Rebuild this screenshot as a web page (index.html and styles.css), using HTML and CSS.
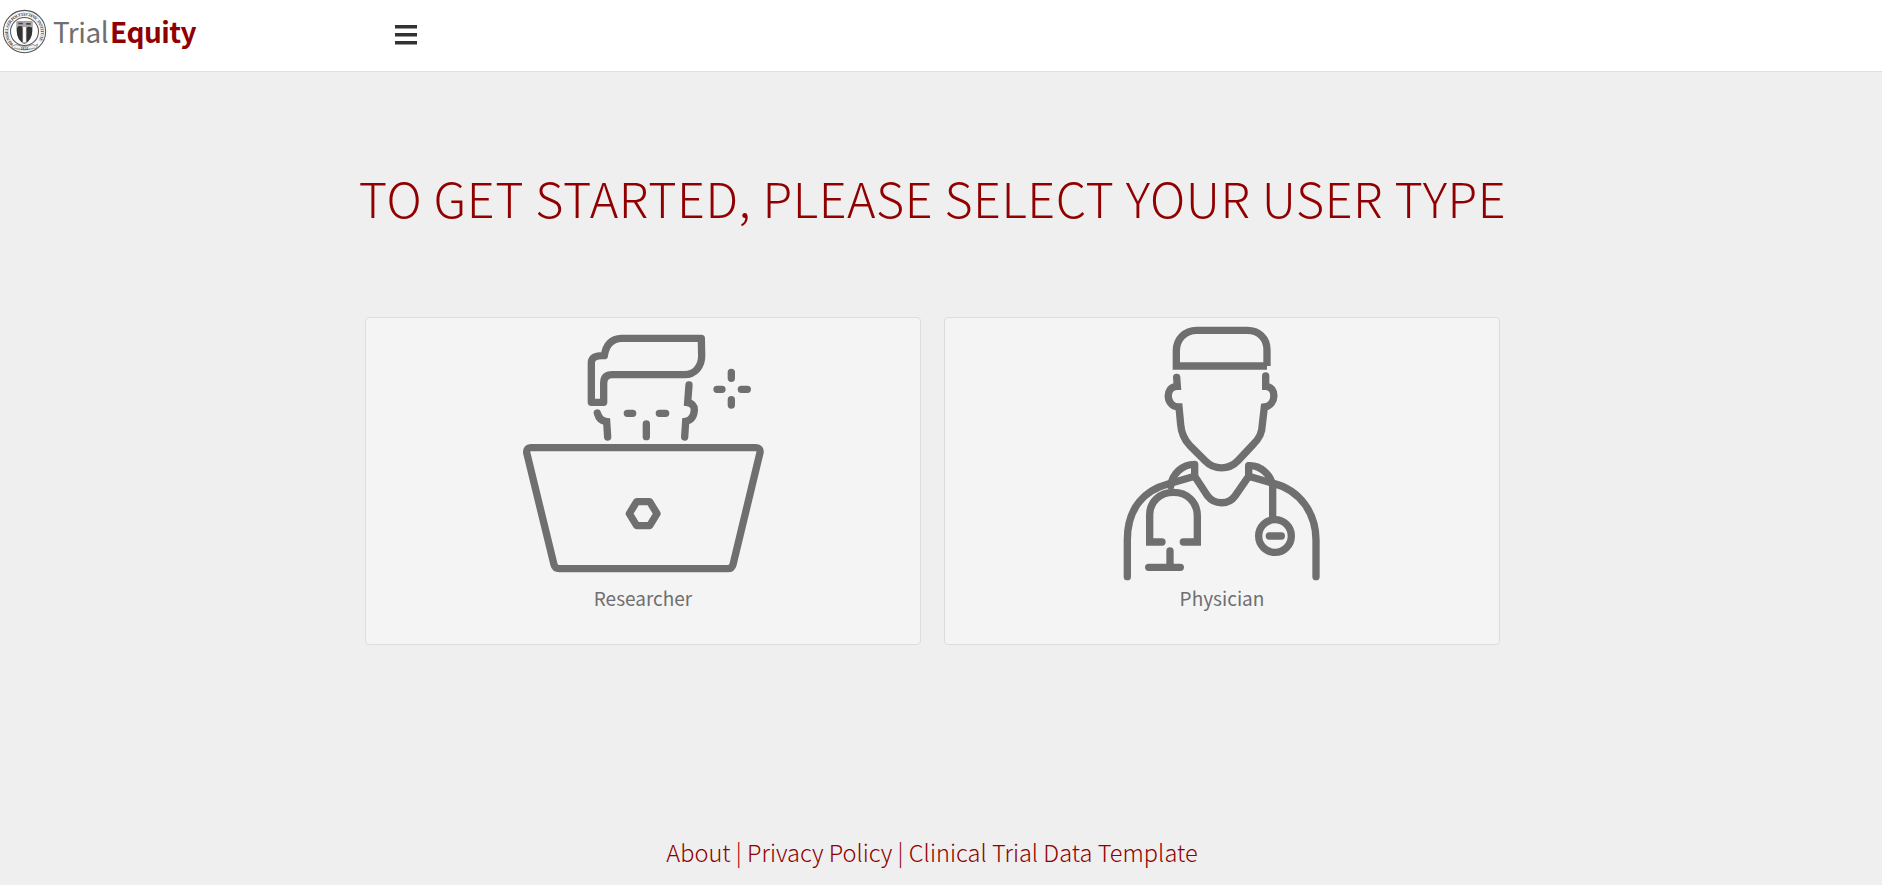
FILE: index.html
```html
<!DOCTYPE html>
<html lang="en">
<head>
<meta charset="utf-8">
<title>TrialEquity</title>
<link rel="stylesheet" href="styles.css">
</head>
<body>
<header class="navbar">
  <a class="brand">
    <svg class="seal" viewBox="0 0 132 132">
      <defs><path id="ring" d="M31 106A52 52 0 1 1 101 106"/></defs>
      <circle cx="66" cy="66" r="62" fill="#f8f8f8" stroke="#555" stroke-width="3"/>
      <circle cx="66" cy="66" r="41" fill="#fff" stroke="#555" stroke-width="3"/>
      <text class="seal-text" dy="4"><textPath href="#ring" textLength="232" startOffset="2">RENSSELAER POLYTECHNIC INSTITUTE</textPath></text>
      <path d="M28 103q7 9 13 1q25 11 50 0q6 8 13-1l-3 14q-7-5-13 0q-22 6-44 0q-6-5-13 0z" fill="#f2f2f2" stroke="#666" stroke-width="2"/>
      <path d="M43 37h46v26q0 28-23 40q-23-12-23-40z" fill="#333"/>
      <path d="M44 37h44v17q-10-4-16 0v47h-12v-47q-6-4-16 0z" fill="#aaa"/>
      <path d="M48 40h13v5h-13zM71 41h13v5h-13zM47 50h12v3h-12z" fill="#444"/>
      <path d="M62 53h8v44h-8z" fill="#fff"/>
      <text class="seal-year" x="66" y="119" text-anchor="middle">· 1824 ·</text>
    </svg>
    <span class="brand-light">Trial</span><span class="brand-bold">Equity</span>
  </a>
  <svg class="menu" viewBox="0 0 22 20"><path d="M0 0h22v3.4H0zM0 8h22v3.4H0zM0 16h22v3.4H0z" fill="#333"/></svg>
</header>
<main>
  <h1 class="title">TO GET STARTED, PLEASE SELECT YOUR USER TYPE</h1>
  <div class="cards">
    <a class="card">
      <svg class="icon researcher" viewBox="0 0 798 780">
        <path d="M574 55H335Q290 57 283 107Q245 105 244 128V247H281V190Q281 164 307 164H523C556 164 575 138 575 108Z"/>
        <path class="sharp" d="M262 279Q268 303 290 305L293 351M537 195L533 248Q553 251 553 270Q551 300 527 304L524 351"/>
        <path d="M352 280h16M448 280h19M409 312v38M621 208h15M694 208h18M664 157v18M664 239v16"/>
        <path d="M62 383H738Q752 383 750 398L669 734Q666 746 653 746H148Q135 746 132 734L50 398Q49 383 62 383Z"/>
        <path d="M380 545H419L441 581L419 617H380L358 581Z"/>
      </svg>
      <span class="label">Researcher</span>
    </a>
    <a class="card">
      <svg class="icon physician" viewBox="0 30 732 780">
        <path class="sharp butt" d="M501 168V120C501 83 475 61 442 61H290C255 61 229 87 229 122V168H501"/>
        <path class="sharp" d="M230 202L232 229C193 228 197 292 237 291L242 344C244 369 250 386 269 406L315 452C343 481 386 481 414 452L459 404C480 383 486 367 487 343L493 291C531 286 530 229 497 229V198"/>
        <path class="sharp" d="M82 800V690C82 590 137 540 204 522L284 499L323 558C343 584 385 586 405 558L446 499L520 520C600 540 648 610 648 690V800"/>
        <path d="M284 499V463C247 463 217 491 212 528M446 499V467C480 465 513 493 518 528V625"/>
        <path class="sharp" d="M186 696H149V615C149 573 181 547 220 547C261 547 292 575 292 618V696H250M210 723V772"/>
        <path d="M146 772H241M508 678H544"/>
        <circle cx="525" cy="678" r="49"/>
      </svg>
      <span class="label">Physician</span>
    </a>
  </div>
</main>
<footer class="footer"><a>About</a> | <a>Privacy Policy</a> | <a>Clinical Trial Data Template</a></footer>
</body>
</html>
```
FILE: styles.css
```css
* { box-sizing: border-box; }
body {
  margin: 0;
  height: 885px;
  overflow: hidden;
  display: flex;
  flex-direction: column;
  background: #efefef;
  color: #6f6f6f;
  font-family: "Noto Sans CJK SC", "Open Sans", sans-serif;
}
.navbar {
  height: 72px;
  flex: none;
  display: flex;
  align-items: flex-start;
  background: #fff;
  border-bottom: 1px solid #dfdfdf;
}
.brand {
  width: 394.5px;
  display: flex;
  padding: 9px 0 0 2px;
  font-size: 28px;
  line-height: 45px;
}
.seal { width: 45px; height: 45px; margin-right: 6px; }
.seal-text { font: bold 13px "Liberation Serif", serif; fill: #444; }
.seal-year { font: bold 11px "Liberation Serif", serif; fill: #444; }
.brand-light { width: 56px; font-weight: 400; letter-spacing: -0.5px; }
.brand-bold { margin-left: 1px; font-weight: 700; color: #900000; letter-spacing: -0.5px; }
.menu { width: 22px; height: 20px; margin-top: 25px; }
.title {
  margin: 85px 0 0;
  padding-right: 17px;
  text-align: center;
  font-size: 48.5px;
  line-height: 80px;
  font-weight: 200;
  letter-spacing: 0.56px;
  color: #900000;
  white-space: nowrap;
}
.cards {
  display: grid;
  grid-template-columns: 556px 556px;
  gap: 23px;
  margin: 80px 0 0 365px;
}
.card {
  height: 328px;
  padding-top: 2px;
  display: flex;
  flex-direction: column;
  align-items: center;
  background: #f4f4f4;
  border: 1px solid #dcdcdc;
  border-radius: 4px;
}
.icon {
  height: 260px;
  overflow: visible;
  fill: none;
  stroke: #6f6f6f;
  stroke-width: 22;
  stroke-linecap: round;
  stroke-linejoin: round;
}
.researcher { width: 266px; }
.physician { width: 244px; }
.sharp { stroke-linejoin: miter; }
.butt { stroke-linecap: butt; }
.label { margin-top: 3px; font-size: 19px; line-height: 30px; }
.footer {
  margin-top: 189px;
  padding-right: 18px;
  text-align: center;
  font-size: 23.6px;
  line-height: 36px;
  font-weight: 300;
  color: #900000;
  white-space: nowrap;
}
```
